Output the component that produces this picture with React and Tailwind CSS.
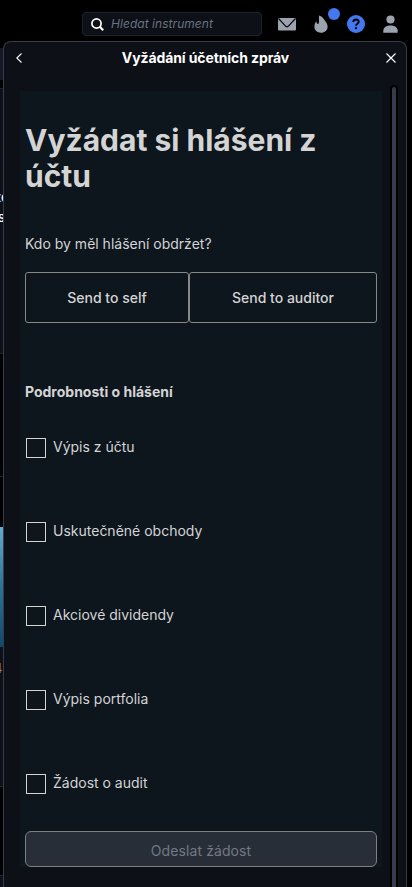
import { useState } from "react";

const reportItems = [
  "Výpis z účtu",
  "Uskutečněné obchody",
  "Akciové dividendy",
  "Výpis portfolia",
  "Žádost o audit",
];

function TopBar() {
  return (
    <header className="flex h-[41px] shrink-0 items-start pl-[82px]">
      <div className="mt-3 flex h-6 w-[180px] items-center rounded border border-[#1c2433] bg-[#0d1017] pl-2">
        <svg viewBox="0 0 13 13" className="h-[13px] w-[13px] shrink-0" fill="none" stroke="#fff" strokeWidth="1.7">
          <circle cx="5.5" cy="5.5" r="4.6" />
          <path d="m8.8 8.8 3.4 3.4" strokeWidth="2.2" />
        </svg>
        <input
          placeholder="Hledat instrument"
          className="ml-[7px] w-[140px] bg-transparent text-[12px] tracking-[0.05px] italic text-white outline-none placeholder:text-[#6b7280]"
        />
      </div>

      <svg viewBox="0 0 18 13" className="mt-[18px] ml-4 h-[13px] w-[18px]">
        <rect width="18" height="12.5" rx="1" fill="#9ca3af" />
        <path d="M.5.5 7.8 8.3q1.2 1 2.4 0L17.5.5" fill="none" stroke="#05070a" strokeWidth="1.2" />
      </svg>

      <div className="relative mt-[15px] ml-[18px] h-[18px] w-[14px]">
        <svg viewBox="0 0 14 18" className="h-[18px] w-[14px]" fill="#9ca3af">
          <path d="M5.2.5C8.5 1.5 9.8 3.8 10.8 5.5 12.5 7.5 13.6 9.3 13.6 11.7 13.6 15.3 10.8 17.7 7 17.7S.4 15.3.4 11.8C.4 9.6 1.2 7.6 2.4 6.3 2.4 7.8 2.9 8.8 3.9 9.1 5.9 8.5 4.400 4.500 5.2.5Z" />
        </svg>
        <span className="absolute -top-[7px] left-[14px] h-3 w-3 rounded-full bg-[#4478f0]" />
      </div>

      <svg viewBox="0 0 18 18" className="mt-[15px] ml-[19px] h-[18px] w-[18px]" fill="none">
        <circle cx="9" cy="9" r="9" fill="#4478f0" />
        <path d="M6.3 7c0-3.3 5.4-3.3 5.4-.2C11.7 8.7 9 8.7 9 10.7" stroke="#000" strokeWidth="1.9" />
        <circle cx="9" cy="13.1" r="1.2" fill="#000" />
      </svg>

      <svg viewBox="0 0 15 18" className="mt-[15px] ml-[18px] h-[18px] w-[15px]" fill="#9ca3af">
        <circle cx="7.5" cy="4.5" r="4.1" />
        <path d="M.3 17.7v-1.900C.3 12.700 3 10.500 7.500 10.500s7.200 2.200 7.200 5.300v1.900Z" />
      </svg>
    </header>
  );
}

// Sliver of the page that stays visible beside the dialog
function PageEdge() {
  return (
    <div className="flex w-[3px] shrink-0 flex-col overflow-hidden text-[13px] text-white">
      <div className="mt-[7px] h-8 shrink-0 bg-[#161923]" />
      <div className="mt-2 h-[266px] shrink-0 border-y border-[#1f2430] bg-[#0d1017]">
        <div className="mt-[98px] leading-5 font-medium">
          <div className="-ml-[6px]">ze</div>
          <div className="-ml-[2px]">s</div>
        </div>
      </div>
      <div className="mt-[122px] h-[51px] shrink-0 border-t border-[#1f2430]" />
      <div className="h-[120px] shrink-0 bg-linear-to-b from-[#67a9cf] via-[#2f7297] to-[#0b4a70]" />
      <div className="h-[140px] shrink-0 border-b border-[#1f2430] bg-[#0d1017]">
        <div className="mt-3 -ml-[6px] text-[#a58b68]">4</div>
      </div>
      <div className="mt-[88px] grow border-t border-[#1f2430] bg-[#0d1017]" />
    </div>
  );
}

function ReportForm() {
  const [checked, setChecked] = useState({});

  return (
    <div className="h-[776px] w-[362px] shrink-0 bg-[#0d151d] px-[5px] text-[#d4d4d4]">
      <h1 className="pt-[31px] text-[30px] leading-9 font-bold">Vyžádat si hlášení z účtu</h1>
      <p className="mt-10 text-[14px] leading-5">Kdo by měl hlášení obdržet?</p>

      <div className="mt-[18px] flex h-[51px] w-[352px] text-[14px] font-medium">
        <button className="w-[164px] rounded-[3px] border border-[#888]">Send to self</button>
        <button className="w-[188px] rounded-[3px] border border-[#888]">Send to auditor</button>
      </div>

      <h2 className="mt-[59px] text-[14px] leading-5 font-bold">Podrobnosti o hlášení</h2>

      <div className="mt-[35px] flex flex-col gap-16">
        {reportItems.map((item) => (
          <label key={item} className="flex h-5 items-start text-[14px] leading-5">
            <input
              type="checkbox"
              checked={!!checked[item]}
              onChange={(e) => setChecked({ ...checked, [item]: e.target.checked })}
              className="mt-px ml-px h-5 w-5 shrink-0 appearance-none border border-[#d4d4d4] checked:bg-[#4478f0]"
            />
            <span className="ml-[7px]">{item}</span>
          </label>
        ))}
      </div>

      <button
        disabled
        className="mt-[38px] h-9 w-[352px] rounded-md border border-[#808080] bg-[#282e38] pt-[2px] text-[14px] tracking-[0.1px] text-[#727986]"
      >
        Odeslat žádost
      </button>
    </div>
  );
}

export default function App() {
  return (
    <div className="flex h-[887px] w-[412px] flex-col overflow-hidden bg-black font-['Inter',sans-serif]">
      <TopBar />
      <div className="flex min-h-0 grow">
        <PageEdge />
        <main className="flex w-[404px] shrink-0 flex-col rounded-t-lg border border-b-0 border-[#363c4c] bg-[#0d1017]">
          <div className="flex h-[43px] shrink-0 items-start text-white">
            <svg viewBox="0 0 6 10" className="mt-[11px] ml-3 h-[10px] w-[6px]" fill="none" stroke="currentColor" strokeWidth="1.1">
              <path d="M5.5.5.8 5l4.7 4.500" />
            </svg>
            <div className="mt-[6px] grow pl-[3px] text-center text-[14px] leading-5 font-bold tracking-[-0.1px]">
              Vyžádání účetních zpráv
            </div>
            <svg viewBox="0 0 10 10" className="mt-[11px] mr-[10px] h-[10px] w-[10px]" stroke="currentColor" strokeWidth="1.2">
              <path d="m.5.5 9 9m0-9-9 9" />
            </svg>
          </div>
          <div className="flex min-h-0 grow">
            <div className="pt-[6px] pl-4">
              <ReportForm />
            </div>
            <div className="ml-[8px] w-2 rounded-t bg-black px-[2px] pt-[2px]">
              <div className="h-full rounded-t-sm bg-[#363c4c]" />
            </div>
          </div>
        </main>
      </div>
    </div>
  );
}
